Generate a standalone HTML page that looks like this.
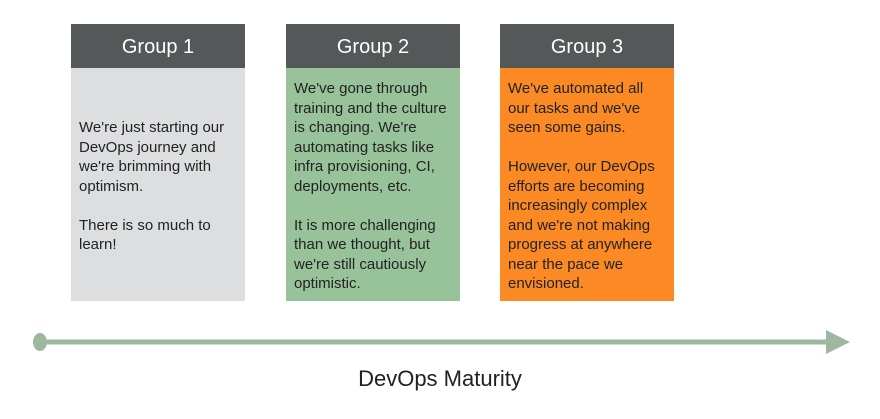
<!DOCTYPE html>
<html><head><style>
body{margin:0;width:880px;height:419px;background:#fff;position:relative;font-family:"Liberation Sans",sans-serif;overflow:hidden}
.h{position:absolute;top:24px;height:44px;width:174px;background:#545858;color:#fff;font-size:20px;text-align:center;line-height:46px}
.b{position:absolute;top:68px;height:233px;width:174px;box-sizing:border-box;padding:11px 6px 0 8px;font-size:15px;line-height:19.5px;color:#222}
.b p{margin:0}
</style></head><body>
<div class="h" style="left:71px">Group 1</div>
<div class="b" style="left:71px;background:#dddee0;padding-top:50px"><p>We're just starting our DevOps journey and we're brimming with optimism.</p><p style="margin-top:19.5px">There is so much to learn!</p></div>
<div class="h" style="left:286px">Group 2</div>
<div class="b" style="left:286px;background:#98c39a"><p>We've gone through training and the culture is changing. We're automating tasks like infra provisioning, CI, deployments, etc.</p><p style="margin-top:19.5px">It is more challenging than we thought, but we're still cautiously optimistic.</p></div>
<div class="h" style="left:500px">Group 3</div>
<div class="b" style="left:500px;background:#fb8a24"><p>We've automated all our tasks and we've seen some gains.</p><p style="margin-top:19.5px">However, our DevOps efforts are becoming increasingly complex and we're not making progress at anywhere near the pace we envisioned.</p></div>
<svg style="position:absolute;left:0;top:0" width="880" height="419">
<line x1="40" y1="342" x2="832" y2="342" stroke="#9fb79f" stroke-width="5"/>
<ellipse cx="40" cy="342" rx="7" ry="9" fill="#9fb79f"/>
<polygon points="826,330 850,342 826,354" fill="#9fb79f"/>
<text x="440" y="386" font-size="22" text-anchor="middle" fill="#222" font-family="Liberation Sans">DevOps Maturity</text>
</svg>
</body></html>
